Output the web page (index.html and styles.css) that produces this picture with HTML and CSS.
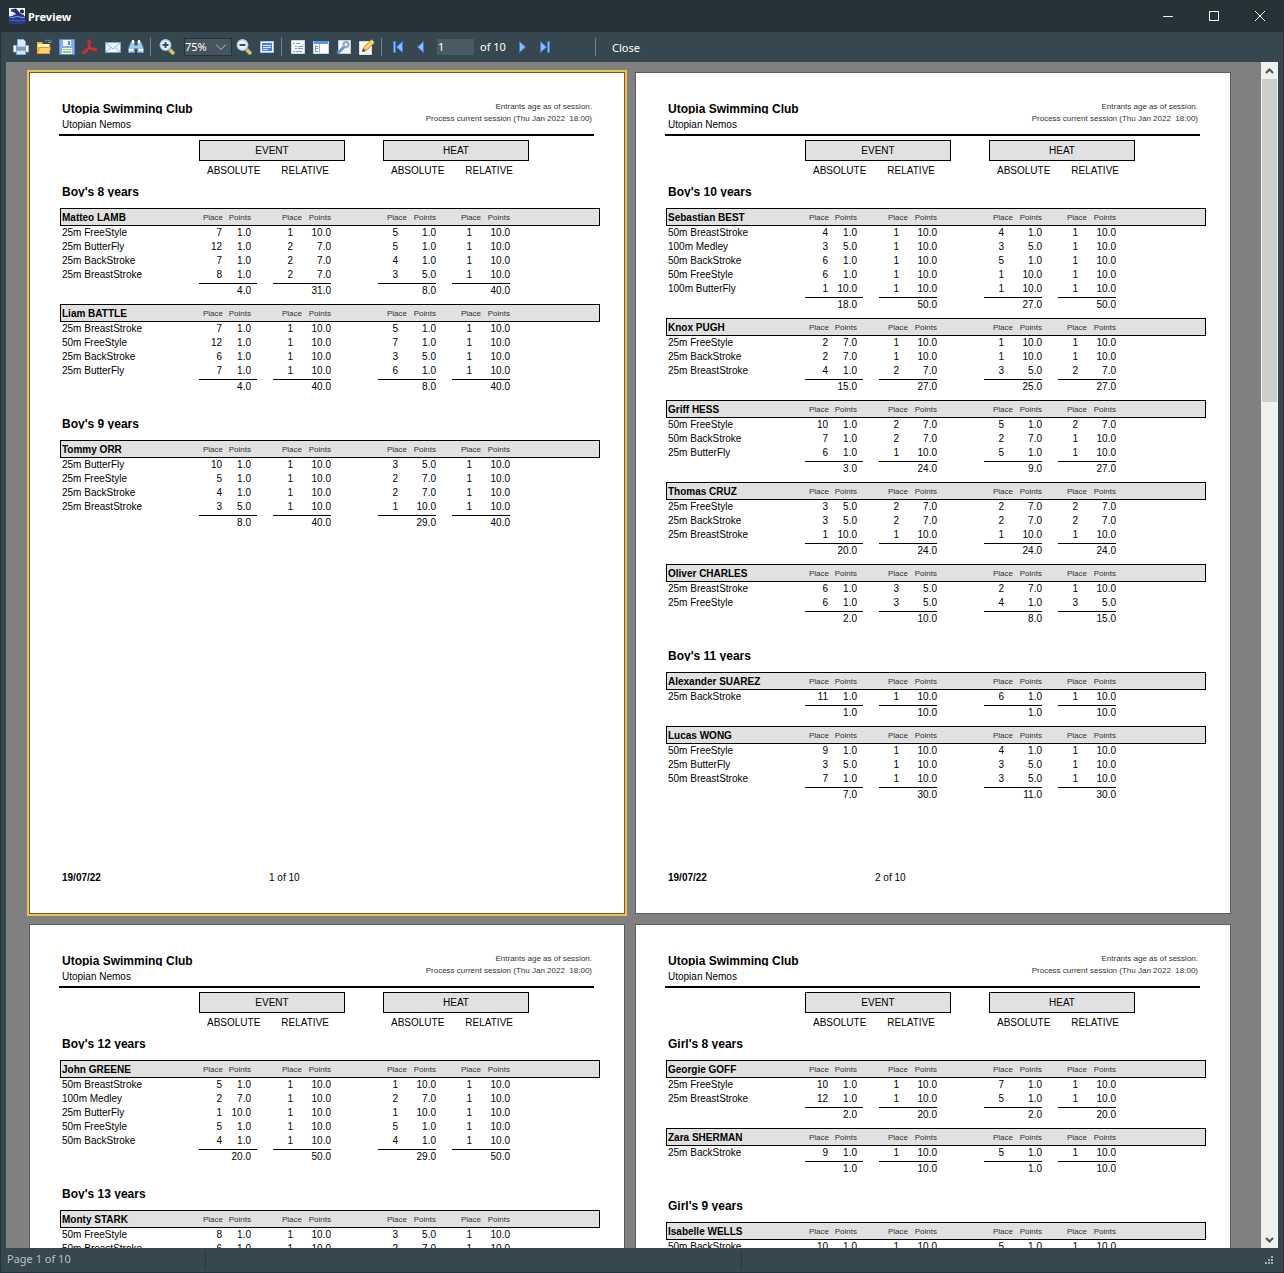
FILE: index.html
```html
<!DOCTYPE html>
<html lang="en">
<head>
<meta charset="utf-8">
<title>Preview</title>
<meta name="viewport" content="width=device-width, initial-scale=1">
<link rel="stylesheet" href="styles.css">
</head>
<body>
<div class="window">
<header class="titlebar">
  <svg class="app-icon" viewBox="0 0 16 16" aria-hidden="true"><path fill="#f4f6fb" d="M0 0h16v8H0z"/><path fill="#2b3788" d="M0 8h16v8H0z"/><path fill="#23307a" d="M2 1.500l5-1L12 6l3 1v1H3l4-2-3-2.500-2 .5z"/><circle cx="13" cy="3.500" r="2" fill="#151c48"/><path stroke="#8d9bdc" fill="none" d="M0 8.500q3 2 6 .5t5 0 5 0"/><path stroke="#5361b0" fill="none" d="M0 12.500q3-1 6 0t10 0"/></svg>
  <h1>Preview</h1>
  <div class="window-buttons">
    <button aria-label="Minimize"><svg viewBox="0 0 12 12"><path d="M1 6.500h10"/></svg></button>
    <button aria-label="Maximize"><svg viewBox="0 0 12 12"><path d="M1.500 1.500h9v9h-9z"/></svg></button>
    <button aria-label="Close window"><svg viewBox="0 0 12 12"><path d="M1 1l10 10M11 1L1 11"/></svg></button>
  </div>
</header>
<nav class="toolbar" aria-label="Preview tools">
  <button aria-label="Print"><svg viewBox="0 0 16 16"><path fill="#d5eafd" stroke="#7fb0e2" d="M4.500.5h6l2 2V8h-8z"/><path fill="#f1f3f4" stroke="#a3adb4" d="M.5 6.500h3V9h9V6.500h3v6.500H.5z"/><path fill="#8c979f" d="M3 8h10v3H3z"/><path fill="#cfe5fb" stroke="#7fb0e2" d="M3.500 11.500h9v4h-9z"/></svg></button>
  <button aria-label="Open"><svg viewBox="0 0 16 16"><path fill="#f0b04a" d="M1 3h5l1 2h7v10H1z"/><path fill="#fff3c4" d="M2 5h11v3H2z"/><path fill="#fdd074" stroke="#e19c30" d="M3.500 8.500h11l-1.500 6H1.500z"/><path fill="none" stroke="#7893aa" d="M9 2.500q3-3 5 0M15 .5v3h-3"/></svg></button>
  <button aria-label="Save"><svg viewBox="0 0 16 16"><path fill="#86aeea" stroke="#5a8ad6" d="M.5.5h15v15H.5z"/><path fill="#f3f7fd" d="M4 1h8v6H4z"/><path fill="#5b87cc" d="M9 2h2v4H9z"/><path fill="#f3f7fd" d="M3 9h10v6H3z"/><path fill="#8fce78" d="M4 10h8v1H4zM4 12h8v2H4z"/></svg></button>
  <button aria-label="Export to PDF"><svg viewBox="0 0 16 16"><path fill="none" stroke="#dc2b2f" stroke-width="1.500" d="M7 8.500C5.500 4.500 6 1 7 1s1.500 3 .5 6.500C6 11.500 3 15 1.500 14.500 0 13.500 2 11 6.500 9.800c4-1 8-.5 8 1.200 0 1.500-4.500.5-7-3.500"/></svg></button>
  <button aria-label="Send by e-mail"><svg viewBox="0 0 16 16"><path fill="#eef5ff" stroke="#7aa6e0" d="M.5 3.500h15v10H.5z"/><path fill="none" stroke="#8fb4e4" d="M1 4l7 6 7-6M1 13l5-4.500M15 13l-5-4.500"/></svg></button>
  <button aria-label="Find"><svg viewBox="0 0 16 16"><path fill="#a9cbea" stroke="#6d9ac6" d="M3.500 2.500h3v4h3v-4h3l3 7v4h-6v-4h-3v4h-6v-4z"/><path fill="#f0f8ff" d="M4 1h2v3H4zM10 1h2v3h-2zM1 10h4v2H1zM11 10h4v2h-4z"/></svg></button>
  <span class="separator"></span>
  <button aria-label="Zoom in"><svg viewBox="0 0 16 16"><path stroke="#8a8f92" stroke-width="4" d="M10 10l4.500 4.500"/><path stroke="#f0c850" stroke-width="2.500" d="M11 11l4 4"/><circle cx="6.500" cy="6" r="5.200" fill="#edf6ff" stroke="#b5cbe0" stroke-width="1.500"/><path stroke="#2f4f78" stroke-width="2" d="M3.500 6h6M6.500 3v6"/></svg></button>
  <label class="zoom-level"><select aria-label="Zoom level"><option>75%</option></select><svg viewBox="0 0 12 8" aria-hidden="true"><path d="M1 1.500l5 5 5-5"/></svg></label>
  <button aria-label="Zoom out"><svg viewBox="0 0 16 16"><path stroke="#8a8f92" stroke-width="4" d="M10 10l4.500 4.500"/><path stroke="#f0c850" stroke-width="2.500" d="M11 11l4 4"/><circle cx="6.500" cy="6" r="5.200" fill="#edf6ff" stroke="#b5cbe0" stroke-width="1.500"/><path stroke="#2f4f78" stroke-width="2" d="M3.500 6h6"/></svg></button>
  <button aria-label="Full screen"><svg viewBox="0 0 16 16"><path fill="#eef5ff" stroke="#a6c6f2" d="M1.500 2.500h13v11h-13z"/><path fill="#4a7fdc" d="M3 4h10v8H3z"/><path stroke="#dbe8fc" d="M4 6.500h8M4 8.500h8M4 10.500h5"/></svg></button>
  <span class="separator"></span>
  <button aria-label="Outline"><svg viewBox="0 0 16 16"><path fill="#f7fafd" stroke="#c6d8ea" d="M1.500 1.500h13v13h-13z"/><path stroke="#7f9cc0" d="M3 4.500h2M6 4.500h4M5 7.500h2M8 7.500h5M5 9.500h2M8 9.500h5M3 12.500h2M6 12.500h6"/></svg></button>
  <button aria-label="Thumbnails"><svg viewBox="0 0 16 16"><path fill="#f9fbfd" stroke="#c6d8ea" d="M.5 2.500h15v12H.5z"/><path fill="#5b96e4" d="M1 2h14v3H1z"/><path stroke="#a3b8cc" d="M6.500 5v9"/><path stroke="#7f98b2" d="M2.500 6v6M2 7.500h3M2 9.500h3M2 12.500h3"/></svg></button>
  <button aria-label="Page settings"><svg viewBox="0 0 16 16"><path fill="#f3f6f9" stroke="#c3ced9" d="M2.500 1.500h12v13h-12z"/><path stroke="#6f93c0" stroke-width="3" d="M1.500 14.500L9 7"/><circle cx="10" cy="5.500" r="2.500" fill="none" stroke="#8aa5c2" stroke-width="2"/></svg></button>
  <button aria-label="Edit page"><svg viewBox="0 0 16 16"><path fill="#fbfbf7" stroke="#dcdfe1" d="M.5 2.500h12v13H.5z"/><path stroke="#c8953a" stroke-width="5" d="M6 10l8-8"/><path stroke="#ffd868" stroke-width="3" d="M6.500 9.500L14 2"/><path fill="#45382a" d="M3 13l1-4 3 3z"/></svg></button>
  <span class="separator"></span>
  <button aria-label="First page"><svg viewBox="0 0 16 16"><path fill="#8dbcfb" stroke="#3f7bdc" d="M3.500 2.500h2v11h-2zM12.500 2.500v11L6.500 8z"/></svg></button>
  <button aria-label="Previous page"><svg viewBox="0 0 16 16"><path fill="#8dbcfb" stroke="#3f7bdc" d="M10.500 2.500v11L4.500 8z"/></svg></button>
  <input class="page-number" aria-label="Page number" value="1">
  <span class="page-count">of 10</span>
  <button aria-label="Next page"><svg viewBox="0 0 16 16"><path fill="#8dbcfb" stroke="#3f7bdc" d="M5.500 2.500v11l6-5.500z"/></svg></button>
  <button aria-label="Last page"><svg viewBox="0 0 16 16"><path fill="#8dbcfb" stroke="#3f7bdc" d="M10.500 2.500h2v11h-2zM3.500 2.500v11l6-5.500z"/></svg></button>
  <span class="separator last"></span>
  <button class="close">Close</button>
</nav>
<div class="workspace">
<main class="pages">

<article class="page selected">
  <header class="page-head">
    <div class="club"><h2>Utopia Swimming Club</h2><p>Utopian Nemos</p></div>
    <p class="session">Entrants age as of session.<br>Process current session (Thu Jan 2022&nbsp; 18:00)</p>
  </header>
  <div class="scopes">
    <div><b>EVENT</b><p><span>ABSOLUTE</span><span>RELATIVE</span></p></div>
    <div><b>HEAT</b><p><span>ABSOLUTE</span><span>RELATIVE</span></p></div>
  </div>
  <section>
    <h3>Boy's 8 years</h3>
    <table>
      <thead><tr><th>Matteo LAMB<th>Place<th>Points<th>Place<th>Points<th>Place<th>Points<th>Place<th>Points<td></thead>
      <tbody>
      <tr><th>25m FreeStyle<td>7<td>1.0<td>1<td>10.0<td>5<td>1.0<td>1<td>10.0
      <tr><th>25m ButterFly<td>12<td>1.0<td>2<td>7.0<td>5<td>1.0<td>1<td>10.0
      <tr><th>25m BackStroke<td>7<td>1.0<td>2<td>7.0<td>4<td>1.0<td>1<td>10.0
      <tr><th>25m BreastStroke<td>8<td>1.0<td>2<td>7.0<td>3<td>5.0<td>1<td>10.0
      </tbody>
      <tfoot><tr><td><td colspan="2"><span>4.0</span><td colspan="2"><span>31.0</span><td colspan="2"><span>8.0</span><td colspan="2"><span>40.0</span></tfoot>
    </table>
    <table>
      <thead><tr><th>Liam BATTLE<th>Place<th>Points<th>Place<th>Points<th>Place<th>Points<th>Place<th>Points<td></thead>
      <tbody>
      <tr><th>25m BreastStroke<td>7<td>1.0<td>1<td>10.0<td>5<td>1.0<td>1<td>10.0
      <tr><th>50m FreeStyle<td>12<td>1.0<td>1<td>10.0<td>7<td>1.0<td>1<td>10.0
      <tr><th>25m BackStroke<td>6<td>1.0<td>1<td>10.0<td>3<td>5.0<td>1<td>10.0
      <tr><th>25m ButterFly<td>7<td>1.0<td>1<td>10.0<td>6<td>1.0<td>1<td>10.0
      </tbody>
      <tfoot><tr><td><td colspan="2"><span>4.0</span><td colspan="2"><span>40.0</span><td colspan="2"><span>8.0</span><td colspan="2"><span>40.0</span></tfoot>
    </table>
  </section>
  <section>
    <h3>Boy's 9 years</h3>
    <table>
      <thead><tr><th>Tommy ORR<th>Place<th>Points<th>Place<th>Points<th>Place<th>Points<th>Place<th>Points<td></thead>
      <tbody>
      <tr><th>25m ButterFly<td>10<td>1.0<td>1<td>10.0<td>3<td>5.0<td>1<td>10.0
      <tr><th>25m FreeStyle<td>5<td>1.0<td>1<td>10.0<td>2<td>7.0<td>1<td>10.0
      <tr><th>25m BackStroke<td>4<td>1.0<td>1<td>10.0<td>2<td>7.0<td>1<td>10.0
      <tr><th>25m BreastStroke<td>3<td>5.0<td>1<td>10.0<td>1<td>10.0<td>1<td>10.0
      </tbody>
      <tfoot><tr><td><td colspan="2"><span>8.0</span><td colspan="2"><span>40.0</span><td colspan="2"><span>29.0</span><td colspan="2"><span>40.0</span></tfoot>
    </table>
  </section>
  <footer class="page-foot"><b>19/07/22</b><span>1 of 10</span></footer>
</article>

<article class="page">
  <header class="page-head">
    <div class="club"><h2>Utopia Swimming Club</h2><p>Utopian Nemos</p></div>
    <p class="session">Entrants age as of session.<br>Process current session (Thu Jan 2022&nbsp; 18:00)</p>
  </header>
  <div class="scopes">
    <div><b>EVENT</b><p><span>ABSOLUTE</span><span>RELATIVE</span></p></div>
    <div><b>HEAT</b><p><span>ABSOLUTE</span><span>RELATIVE</span></p></div>
  </div>
  <section>
    <h3>Boy's 10 years</h3>
    <table>
      <thead><tr><th>Sebastian BEST<th>Place<th>Points<th>Place<th>Points<th>Place<th>Points<th>Place<th>Points<td></thead>
      <tbody>
      <tr><th>50m BreastStroke<td>4<td>1.0<td>1<td>10.0<td>4<td>1.0<td>1<td>10.0
      <tr><th>100m Medley<td>3<td>5.0<td>1<td>10.0<td>3<td>5.0<td>1<td>10.0
      <tr><th>50m BackStroke<td>6<td>1.0<td>1<td>10.0<td>5<td>1.0<td>1<td>10.0
      <tr><th>50m FreeStyle<td>6<td>1.0<td>1<td>10.0<td>1<td>10.0<td>1<td>10.0
      <tr><th>100m ButterFly<td>1<td>10.0<td>1<td>10.0<td>1<td>10.0<td>1<td>10.0
      </tbody>
      <tfoot><tr><td><td colspan="2"><span>18.0</span><td colspan="2"><span>50.0</span><td colspan="2"><span>27.0</span><td colspan="2"><span>50.0</span></tfoot>
    </table>
    <table>
      <thead><tr><th>Knox PUGH<th>Place<th>Points<th>Place<th>Points<th>Place<th>Points<th>Place<th>Points<td></thead>
      <tbody>
      <tr><th>25m FreeStyle<td>2<td>7.0<td>1<td>10.0<td>1<td>10.0<td>1<td>10.0
      <tr><th>25m BackStroke<td>2<td>7.0<td>1<td>10.0<td>1<td>10.0<td>1<td>10.0
      <tr><th>25m BreastStroke<td>4<td>1.0<td>2<td>7.0<td>3<td>5.0<td>2<td>7.0
      </tbody>
      <tfoot><tr><td><td colspan="2"><span>15.0</span><td colspan="2"><span>27.0</span><td colspan="2"><span>25.0</span><td colspan="2"><span>27.0</span></tfoot>
    </table>
    <table>
      <thead><tr><th>Griff HESS<th>Place<th>Points<th>Place<th>Points<th>Place<th>Points<th>Place<th>Points<td></thead>
      <tbody>
      <tr><th>50m FreeStyle<td>10<td>1.0<td>2<td>7.0<td>5<td>1.0<td>2<td>7.0
      <tr><th>50m BackStroke<td>7<td>1.0<td>2<td>7.0<td>2<td>7.0<td>1<td>10.0
      <tr><th>25m ButterFly<td>6<td>1.0<td>1<td>10.0<td>5<td>1.0<td>1<td>10.0
      </tbody>
      <tfoot><tr><td><td colspan="2"><span>3.0</span><td colspan="2"><span>24.0</span><td colspan="2"><span>9.0</span><td colspan="2"><span>27.0</span></tfoot>
    </table>
    <table>
      <thead><tr><th>Thomas CRUZ<th>Place<th>Points<th>Place<th>Points<th>Place<th>Points<th>Place<th>Points<td></thead>
      <tbody>
      <tr><th>25m FreeStyle<td>3<td>5.0<td>2<td>7.0<td>2<td>7.0<td>2<td>7.0
      <tr><th>25m BackStroke<td>3<td>5.0<td>2<td>7.0<td>2<td>7.0<td>2<td>7.0
      <tr><th>25m BreastStroke<td>1<td>10.0<td>1<td>10.0<td>1<td>10.0<td>1<td>10.0
      </tbody>
      <tfoot><tr><td><td colspan="2"><span>20.0</span><td colspan="2"><span>24.0</span><td colspan="2"><span>24.0</span><td colspan="2"><span>24.0</span></tfoot>
    </table>
    <table>
      <thead><tr><th>Oliver CHARLES<th>Place<th>Points<th>Place<th>Points<th>Place<th>Points<th>Place<th>Points<td></thead>
      <tbody>
      <tr><th>25m BreastStroke<td>6<td>1.0<td>3<td>5.0<td>2<td>7.0<td>1<td>10.0
      <tr><th>25m FreeStyle<td>6<td>1.0<td>3<td>5.0<td>4<td>1.0<td>3<td>5.0
      </tbody>
      <tfoot><tr><td><td colspan="2"><span>2.0</span><td colspan="2"><span>10.0</span><td colspan="2"><span>8.0</span><td colspan="2"><span>15.0</span></tfoot>
    </table>
  </section>
  <section>
    <h3>Boy's 11 years</h3>
    <table>
      <thead><tr><th>Alexander SUAREZ<th>Place<th>Points<th>Place<th>Points<th>Place<th>Points<th>Place<th>Points<td></thead>
      <tbody>
      <tr><th>25m BackStroke<td>11<td>1.0<td>1<td>10.0<td>6<td>1.0<td>1<td>10.0
      </tbody>
      <tfoot><tr><td><td colspan="2"><span>1.0</span><td colspan="2"><span>10.0</span><td colspan="2"><span>1.0</span><td colspan="2"><span>10.0</span></tfoot>
    </table>
    <table>
      <thead><tr><th>Lucas WONG<th>Place<th>Points<th>Place<th>Points<th>Place<th>Points<th>Place<th>Points<td></thead>
      <tbody>
      <tr><th>50m FreeStyle<td>9<td>1.0<td>1<td>10.0<td>4<td>1.0<td>1<td>10.0
      <tr><th>25m ButterFly<td>3<td>5.0<td>1<td>10.0<td>3<td>5.0<td>1<td>10.0
      <tr><th>50m BreastStroke<td>7<td>1.0<td>1<td>10.0<td>3<td>5.0<td>1<td>10.0
      </tbody>
      <tfoot><tr><td><td colspan="2"><span>7.0</span><td colspan="2"><span>30.0</span><td colspan="2"><span>11.0</span><td colspan="2"><span>30.0</span></tfoot>
    </table>
  </section>
  <footer class="page-foot"><b>19/07/22</b><span>2 of 10</span></footer>
</article>

<article class="page">
  <header class="page-head">
    <div class="club"><h2>Utopia Swimming Club</h2><p>Utopian Nemos</p></div>
    <p class="session">Entrants age as of session.<br>Process current session (Thu Jan 2022&nbsp; 18:00)</p>
  </header>
  <div class="scopes">
    <div><b>EVENT</b><p><span>ABSOLUTE</span><span>RELATIVE</span></p></div>
    <div><b>HEAT</b><p><span>ABSOLUTE</span><span>RELATIVE</span></p></div>
  </div>
  <section>
    <h3>Boy's 12 years</h3>
    <table>
      <thead><tr><th>John GREENE<th>Place<th>Points<th>Place<th>Points<th>Place<th>Points<th>Place<th>Points<td></thead>
      <tbody>
      <tr><th>50m BreastStroke<td>5<td>1.0<td>1<td>10.0<td>1<td>10.0<td>1<td>10.0
      <tr><th>100m Medley<td>2<td>7.0<td>1<td>10.0<td>2<td>7.0<td>1<td>10.0
      <tr><th>25m ButterFly<td>1<td>10.0<td>1<td>10.0<td>1<td>10.0<td>1<td>10.0
      <tr><th>50m FreeStyle<td>5<td>1.0<td>1<td>10.0<td>5<td>1.0<td>1<td>10.0
      <tr><th>50m BackStroke<td>4<td>1.0<td>1<td>10.0<td>4<td>1.0<td>1<td>10.0
      </tbody>
      <tfoot><tr><td><td colspan="2"><span>20.0</span><td colspan="2"><span>50.0</span><td colspan="2"><span>29.0</span><td colspan="2"><span>50.0</span></tfoot>
    </table>
  </section>
  <section>
    <h3>Boy's 13 years</h3>
    <table>
      <thead><tr><th>Monty STARK<th>Place<th>Points<th>Place<th>Points<th>Place<th>Points<th>Place<th>Points<td></thead>
      <tbody>
      <tr><th>50m FreeStyle<td>8<td>1.0<td>1<td>10.0<td>3<td>5.0<td>1<td>10.0
      <tr><th>50m BreastStroke<td>6<td>1.0<td>1<td>10.0<td>2<td>7.0<td>1<td>10.0
      </tbody>
    </table>
  </section>
</article>

<article class="page">
  <header class="page-head">
    <div class="club"><h2>Utopia Swimming Club</h2><p>Utopian Nemos</p></div>
    <p class="session">Entrants age as of session.<br>Process current session (Thu Jan 2022&nbsp; 18:00)</p>
  </header>
  <div class="scopes">
    <div><b>EVENT</b><p><span>ABSOLUTE</span><span>RELATIVE</span></p></div>
    <div><b>HEAT</b><p><span>ABSOLUTE</span><span>RELATIVE</span></p></div>
  </div>
  <section>
    <h3>Girl's 8 years</h3>
    <table>
      <thead><tr><th>Georgie GOFF<th>Place<th>Points<th>Place<th>Points<th>Place<th>Points<th>Place<th>Points<td></thead>
      <tbody>
      <tr><th>25m FreeStyle<td>10<td>1.0<td>1<td>10.0<td>7<td>1.0<td>1<td>10.0
      <tr><th>25m BreastStroke<td>12<td>1.0<td>1<td>10.0<td>5<td>1.0<td>1<td>10.0
      </tbody>
      <tfoot><tr><td><td colspan="2"><span>2.0</span><td colspan="2"><span>20.0</span><td colspan="2"><span>2.0</span><td colspan="2"><span>20.0</span></tfoot>
    </table>
    <table>
      <thead><tr><th>Zara SHERMAN<th>Place<th>Points<th>Place<th>Points<th>Place<th>Points<th>Place<th>Points<td></thead>
      <tbody>
      <tr><th>25m BackStroke<td>9<td>1.0<td>1<td>10.0<td>5<td>1.0<td>1<td>10.0
      </tbody>
      <tfoot><tr><td><td colspan="2"><span>1.0</span><td colspan="2"><span>10.0</span><td colspan="2"><span>1.0</span><td colspan="2"><span>10.0</span></tfoot>
    </table>
  </section>
  <section>
    <h3>Girl's 9 years</h3>
    <table>
      <thead><tr><th>Isabelle WELLS<th>Place<th>Points<th>Place<th>Points<th>Place<th>Points<th>Place<th>Points<td></thead>
      <tbody>
      <tr><th>50m BackStroke<td>10<td>1.0<td>1<td>10.0<td>5<td>1.0<td>1<td>10.0
      </tbody>
    </table>
  </section>
</article>

</main>
<div class="scrollbar">
  <button aria-label="Scroll up"><svg viewBox="0 0 9 6"><path d="M1 5l3.500-3.500L8 5"/></svg></button>
  <div class="track"><div class="thumb"></div></div>
  <button aria-label="Scroll down"><svg viewBox="0 0 9 6"><path d="M1 1l3.500 3.500L8 1"/></svg></button>
</div>
</div>
<footer class="statusbar">
  <span class="status-page">Page 1 of 10</span>
  <span class="status-message"></span>
  <svg class="grip" viewBox="0 0 8 8" aria-hidden="true"><path d="M6 0h2v2H6zM3 3h2v2H3zM6 3h2v2H6zM0 6h2v2H0zM3 6h2v2H3zM6 6h2v2H6z"/></svg>
</footer>
</div>
</body>
</html>
```
FILE: styles.css
```css
* { box-sizing: border-box; margin: 0; padding: 0; }

body {
  font: 11px/16px "Noto Sans", "Open Sans", sans-serif;
  color: #fff;
  background: #263238;
}

button { border: 0; background: none; color: inherit; font: inherit; }

.window {
  display: flex;
  flex-direction: column;
  height: 100vh;
  overflow: hidden;
  border: solid #263238;
  border-width: 0 1px 1px;
  background: #37474f;
}

.titlebar {
  display: flex;
  flex: none;
  align-items: center;
  gap: 3px;
  height: 32px;
  padding-left: 8px;
  background: #263238;
}
.titlebar h1 { padding-top: 2px; font-size: 11px; font-weight: 700; }
.app-icon { width: 16px; height: 16px; }
.window-buttons { display: flex; margin-left: auto; }
.window-buttons button { display: grid; place-items: center; width: 46px; height: 32px; }
.window-buttons svg { width: 12px; height: 12px; fill: none; stroke: #fff; }

.toolbar {
  display: flex;
  flex: none;
  align-items: center;
  height: 30px;
  padding-left: 8px;
}
.toolbar button { flex: none; height: 24px; }
.toolbar button:not(.close) { display: grid; place-items: center; width: 23px; }
.toolbar button svg { width: 16px; height: 16px; fill: none; }
.separator { flex: none; width: 1px; height: 18px; margin: 0 4px 0 3px; background: #75828a; }
.separator.last { margin: 0 16px 0 39px; }
.toolbar .close { padding-top: 2px; }
.zoom-level {
  display: grid;
  grid-template-columns: 1fr 12px;
  align-items: center;
  width: 48px;
  height: 18px;
  margin-left: 6px;
  padding-right: 4px;
  border: 1px solid #263238;
  background: #46555d;
}
.zoom-level select {
  grid-area: 1 / 1 / 2 / 3;
  height: 16px;
  appearance: none;
  border: 0;
  background: none;
  color: #fff;
  font: inherit;
}
.zoom-level svg { grid-area: 1 / 2; width: 12px; height: 8px; fill: none; stroke: #b6c0c5; pointer-events: none; }
.page-number {
  width: 37px;
  height: 16px;
  margin: 0 6px 0 5px;
  padding-left: 1px;
  border: 0;
  background: #4b5a62;
  color: #fff;
  font: inherit;
}
.page-count { width: 30px; }

.workspace { display: flex; flex: 1; min-height: 0; padding: 0 5px; }
.pages {
  display: grid;
  flex: 1;
  grid-template-columns: repeat(2, minmax(0, 1fr));
  align-content: start;
  align-items: start;
  gap: 10px;
  overflow: hidden;
  padding: 10px 30px 0 23px;
  background: #808080;
}

.page {
  display: flex;
  flex-direction: column;
  aspect-ratio: 298 / 421;
  padding: 29px 24px 28px 30px;
  border: 1px solid #5c5c5c;
  background: #fff;
  color: #000;
  font: 10px/14px "Liberation Sans", Arial, sans-serif;
}
.page.selected { border-color: #7a5c20; outline: 2px solid #efc05a; }

.page-head {
  display: flex;
  justify-content: space-between;
  height: 34px;
  margin: 0 6px 0 -1px;
  padding: 0 2px 0 3px;
  border-bottom: 2px solid #000;
}
h2, h3 { overflow: hidden; font-size: 12px; line-height: 14px; font-weight: 700; }
h2 { height: 12px; margin-bottom: 4px; }
h3 { height: 13px; margin: 0 0 11px 2px; line-height: 16px; }
.session { margin-top: -1px; color: #333; font-size: 8px; line-height: 12px; text-align: right; }

.scopes { display: flex; gap: 38px; padding: 4px 0 6px 139px; }
.scopes div { width: 146px; }
.scopes b {
  display: block;
  margin-bottom: 3px;
  border: 1px solid #000;
  background: #e1e1e1;
  font-weight: 400;
  line-height: 19px;
  text-align: center;
}
.scopes p { display: flex; gap: 21px; padding-left: 8px; }

section + section { margin-top: 16px; }

table { width: 100%; margin-bottom: 6px; table-layout: fixed; border-collapse: collapse; }
th, td { font-weight: 400; text-align: right; white-space: nowrap; }
thead { background: #e1e1e1; outline: 1px solid #000; outline-offset: -1px; }
thead tr { height: 18px; }
thead th { width: 28px; padding-top: 2px; color: #333; font-size: 8px; }
thead th:nth-child(even) { width: 46px; padding-right: 1px; }
thead th:nth-child(2) { width: 24px; padding-right: 0; }
thead th:nth-child(3) { width: 34px; }
thead th:nth-child(6) { width: 77px; }
tr th:first-child { padding-left: 2px; text-align: left; }
thead th:first-child { width: 139px; color: #000; font-size: 10px; font-weight: 700; }
tr > :nth-child(3) { padding-right: 6px; }
tbody tr { height: 14px; }
tbody td:nth-child(even) { padding-right: 10px; }
tbody td:nth-child(2) { padding-right: 1px; }
tfoot td { height: 16px; vertical-align: bottom; }
tfoot span { display: block; margin-left: 16px; border-top: 1px solid #000; }
tfoot td:nth-child(2) span { margin-left: 0; padding-right: 6px; }
tfoot td:nth-child(3) { padding-right: 0; }
tfoot td:nth-child(4) span { margin-left: 47px; }

.page-foot { display: flex; margin-top: auto; padding-left: 2px; }
.page-foot b { width: 207px; }

.scrollbar { display: flex; flex: none; flex-direction: column; width: 17px; background: #f0f0f0; }
.scrollbar button { display: grid; place-items: center; height: 17px; }
.scrollbar svg { width: 9px; height: 6px; fill: none; stroke: #505050; stroke-width: 2; }
.track { flex: 1; padding: 0 1px; }
.thumb { height: 28%; background: #cdcdcd; }

.statusbar { display: flex; flex: none; align-items: center; height: 24px; padding: 0 10px 0 6px; color: #b4c0c6; }
.status-page, .status-message { height: 18px; border-right: 1px solid #2a373e; }
.status-page { width: 199px; }
.status-message { width: 536px; }
.grip { width: 8px; height: 8px; margin-left: auto; fill: #a3b0b7; }
```
